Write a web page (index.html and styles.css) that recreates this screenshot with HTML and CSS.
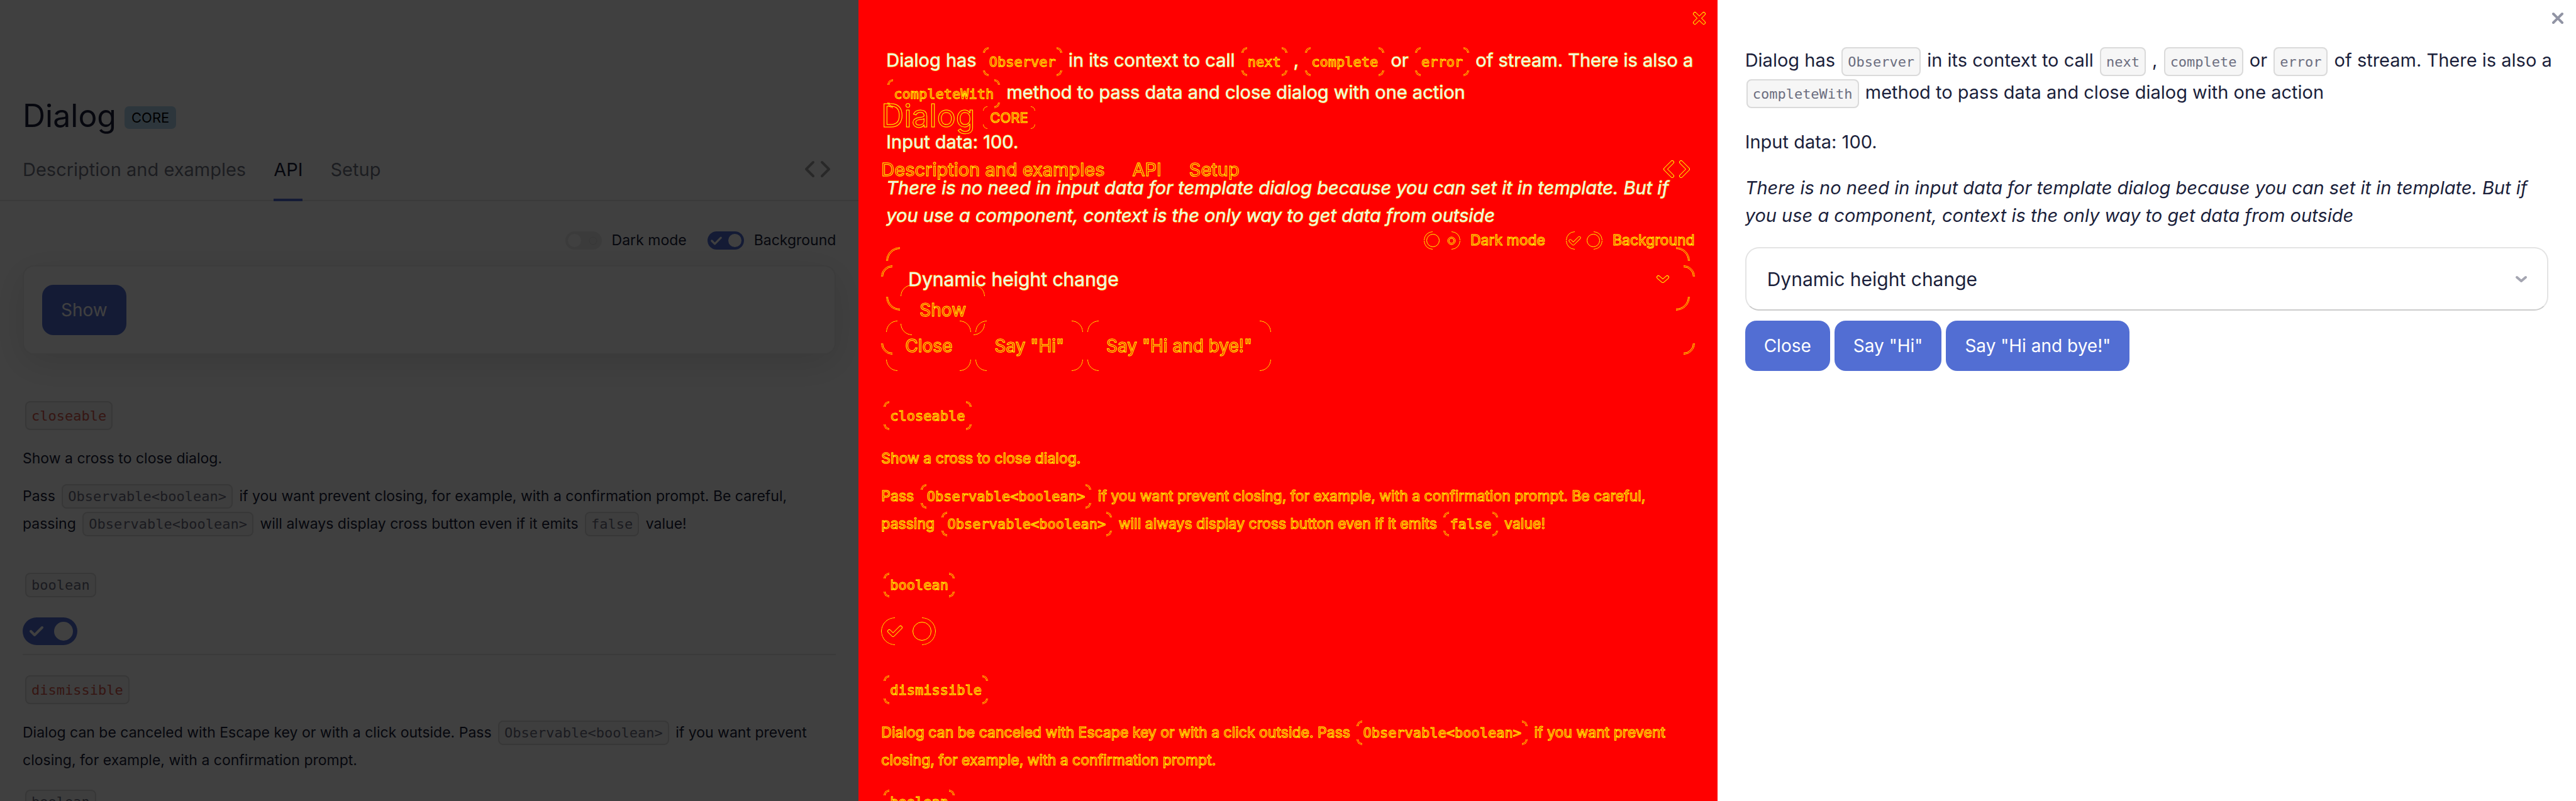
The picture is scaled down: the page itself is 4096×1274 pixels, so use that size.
FILE: index.html
```html
<!DOCTYPE html>
<html lang="en">
<head>
<meta charset="utf-8">
<title>Dialog</title>
<link rel="stylesheet" href="styles.css">
</head>
<body>
<main class="compare">

<section class="shot">
  <div class="layer page">
    <header class="heading"><h1 class="title">Dialog</h1><span class="badge">CORE</span></header>
    <nav class="tabs">
      <a class="tab" href="#examples">Description and examples</a>
      <a class="tab tab-active" href="#api">API</a>
      <a class="tab" href="#setup">Setup</a>
      <button class="source" type="button" aria-label="Source code"><svg width="42" height="28" viewBox="0 0 42 28"><path class="line" d="M14 3 3 14l11 11M28 3l11 11-11 11"/></svg></button>
    </nav>
    <div class="content">
      <div class="options">
        <label class="option"><span class="switch"><input class="track" type="checkbox"><svg class="mark-off" width="14" height="14" viewBox="0 0 14 14"><circle class="ring" cx="7" cy="7" r="6"/></svg></span>Dark mode</label>
        <label class="option"><span class="switch"><input class="track" type="checkbox" checked><svg class="mark" width="20" height="16" viewBox="0 0 24 20"><path class="line" d="M3 10l6 6L21 4"/></svg></span>Background</label>
      </div>
      <div class="card"><button class="button" type="button">Show</button></div>
      <section class="property">
        <h2 class="name"><code class="code code-name">closeable</code></h2>
        <div class="description description-long">
          <p class="text">Show a cross to close dialog.</p>
          <p class="text">Pass <code class="code">Observable&lt;boolean&gt;</code> if you want prevent closing, for example, with a confirmation prompt. Be careful, passing <code class="code">Observable&lt;boolean&gt;</code> will always display cross button even if it emits <code class="code">false</code> value!</p>
        </div>
        <p class="type"><code class="code">boolean</code></p>
        <span class="switch switch-large"><input class="track" type="checkbox" aria-label="closeable" checked><svg class="mark" width="24" height="20" viewBox="0 0 24 20"><path class="line" d="M3 10l6 6L21 4"/></svg></span>
      </section>
      <section class="property property-next">
        <h2 class="name"><code class="code code-name">dismissible</code></h2>
        <div class="description">
          <p class="text">Dialog can be canceled with Escape key or with a click outside. Pass <code class="code">Observable&lt;boolean&gt;</code> if you want prevent closing, for example, with a confirmation prompt.</p>
        </div>
        <p class="type"><code class="code">boolean</code></p>
      </section>
    </div>
  </div>
  <div class="layer overlay"></div>
</section>

<section class="shot diff">
  <div class="layer page">
    <header class="heading"><h1 class="title">Dialog</h1><span class="badge">CORE</span></header>
    <nav class="tabs">
      <a class="tab" href="#examples">Description and examples</a>
      <a class="tab tab-active" href="#api">API</a>
      <a class="tab" href="#setup">Setup</a>
      <button class="source" type="button" aria-label="Source code"><svg width="42" height="28" viewBox="0 0 42 28"><path class="edge" d="M14 3 3 14l11 11M28 3l11 11-11 11"/><path class="line" d="M14 3 3 14l11 11M28 3l11 11-11 11"/></svg></button>
    </nav>
    <div class="content">
      <div class="options">
        <label class="option"><span class="switch"><input class="track" type="checkbox"><svg class="mark-off" width="14" height="14" viewBox="0 0 14 14"><circle class="ring" cx="7" cy="7" r="6"/><circle class="ring" cx="7" cy="7" r="4"/></svg></span>Dark mode</label>
        <label class="option"><span class="switch"><input class="track" type="checkbox" checked><svg class="mark" width="20" height="16" viewBox="0 0 24 20"><path class="edge" d="M3 10l6 6L21 4"/><path class="line" d="M3 10l6 6L21 4"/></svg></span>Background</label>
      </div>
      <div class="card"><button class="button" type="button">Show</button></div>
      <section class="property">
        <h2 class="name"><code class="code code-name">closeable</code></h2>
        <div class="description description-long">
          <p class="text">Show a cross to close dialog.</p>
          <p class="text">Pass <code class="code">Observable&lt;boolean&gt;</code> if you want prevent closing, for example, with a confirmation prompt. Be careful, passing <code class="code">Observable&lt;boolean&gt;</code> will always display cross button even if it emits <code class="code">false</code> value!</p>
        </div>
        <p class="type"><code class="code">boolean</code></p>
        <span class="switch switch-large"><input class="track" type="checkbox" aria-label="closeable" checked><svg class="mark" width="24" height="20" viewBox="0 0 24 20"><path class="edge" d="M3 10l6 6L21 4"/><path class="line" d="M3 10l6 6L21 4"/></svg></span>
      </section>
      <section class="property property-next">
        <h2 class="name"><code class="code code-name">dismissible</code></h2>
        <div class="description">
          <p class="text">Dialog can be canceled with Escape key or with a click outside. Pass <code class="code">Observable&lt;boolean&gt;</code> if you want prevent closing, for example, with a confirmation prompt.</p>
        </div>
        <p class="type"><code class="code">boolean</code></p>
      </section>
    </div>
  </div>
  <div class="layer dialog">
    <button class="close" type="button" aria-label="Close dialog"><svg width="22" height="22" viewBox="0 0 22 22"><path class="edge" d="M4 4l14 14M18 4 4 18"/><path class="line" d="M4 4l14 14M18 4 4 18"/></svg></button>
    <p class="lead">Dialog has <code class="code">Observer</code> in its context to call <code class="code">next</code> , <code class="code">complete</code> or <code class="code">error</code> of stream. There is also a <code class="code">completeWith</code> method to pass data and close dialog with one action</p>
    <p class="data">Input data: 100.</p>
    <p class="note">There is no need in input data for template dialog because you can set it in template. But if you use a component, context is the only way to get data from outside</p>
    <button class="accordion" type="button" aria-expanded="false">Dynamic height change<svg width="22" height="14" viewBox="0 0 22 14"><path class="edge" d="M4 4l7 6 7-6"/><path class="line" d="M4 4l7 6 7-6"/></svg></button>
    <div class="actions">
      <button class="button" type="button">Close</button>
      <button class="button" type="button">Say "Hi"</button>
      <button class="button" type="button">Say "Hi and bye!"</button>
    </div>
  </div>
</section>

<section class="shot">
  <div class="layer dialog">
    <button class="close" type="button" aria-label="Close dialog"><svg width="22" height="22" viewBox="0 0 22 22"><path class="line" d="M4 4l14 14M18 4 4 18"/></svg></button>
    <p class="lead">Dialog has <code class="code">Observer</code> in its context to call <code class="code">next</code> , <code class="code">complete</code> or <code class="code">error</code> of stream. There is also a <code class="code">completeWith</code> method to pass data and close dialog with one action</p>
    <p class="data">Input data: 100.</p>
    <p class="note">There is no need in input data for template dialog because you can set it in template. But if you use a component, context is the only way to get data from outside</p>
    <button class="accordion" type="button" aria-expanded="false">Dynamic height change<svg width="22" height="14" viewBox="0 0 22 14"><path class="line" d="M4 4l7 6 7-6"/></svg></button>
    <div class="actions">
      <button class="button" type="button">Close</button>
      <button class="button" type="button">Say "Hi"</button>
      <button class="button" type="button">Say "Hi and bye!"</button>
    </div>
  </div>
</section>

</main>
</body>
</html>
```
FILE: styles.css
```css
*, *::before, *::after { box-sizing: border-box; }

body {
  margin: 0;
  font-family: Inter, "Liberation Sans", sans-serif;
  color: #1b1f3b;
  background: #fff;
}

h1, h2, p { margin: 0; font-weight: 400; }
svg { display: block; flex: none; }
button { font-family: inherit; color: inherit; border: 0; background: none; padding: 0; }

.compare {
  display: grid;
  grid-template-columns: repeat(3, minmax(0, 1fr));
  height: 100vh;
  overflow: hidden;
}

.shot { display: grid; grid-template-columns: minmax(0, 1fr); overflow: hidden; background: #fff; }
.layer { grid-area: 1 / 1; position: relative; }
.overlay { background: rgba(0, 0, 0, .75); }

.line { fill: none; stroke: currentColor; stroke-width: 4; stroke-linecap: round; stroke-linejoin: round; }
.edge { fill: none; stroke: #ff0; stroke-width: 6; stroke-linecap: round; stroke-linejoin: round; }

/* Documentation page */
.heading { display: flex; align-items: center; gap: 13px; padding: 154px 36px 0; }
.title { font-size: 50px; line-height: 60px; }
.badge {
  position: relative;
  margin-top: 6px;
  padding: 0 11px;
  border-radius: 7px;
  font-size: 22px;
  line-height: 36px;
  color: #000;
  background: #b4d8f0;
}

.tabs { display: flex; gap: 44px; padding: 0 36px; box-shadow: inset 0 -2px #e6e6e6; }
.tab {
  padding: 38px 0 28px;
  border-bottom: 4px solid transparent;
  font-size: 29px;
  line-height: 36px;
  color: rgba(27, 31, 59, .65);
  text-decoration: none;
}
.tab-active { color: #1b1f3b; border-bottom-color: #526ed3; }
.source { margin-left: auto; padding: 4px 8px 0 0; color: #a0a0a0; }

.content { padding: 48px 36px 0; }
.options { display: flex; justify-content: flex-end; gap: 33px; }
.option { display: flex; gap: 16px; font-size: 23px; line-height: 29px; }

.switch { position: relative; display: block; width: 58px; height: 29px; color: #fff; }
.track {
  appearance: none;
  display: flex;
  width: 100%;
  height: 100%;
  margin: 0;
  padding: 4px;
  border-radius: 22px;
  background: #ebebeb;
}
.track::before { content: ""; height: 100%; aspect-ratio: 1; border-radius: 50%; background: #fff; }
.track:checked { justify-content: flex-end; background: #526ed3; }
.mark { position: absolute; left: 4px; top: 7px; }
.mark-off { position: absolute; right: 7px; top: 8px; }
.ring { fill: none; stroke: #d8d8d8; }
.switch-large { width: 87px; height: 44px; }
.switch-large .track { padding: 7px; }
.switch-large .mark { left: 10px; top: 12px; }

.card {
  position: relative;
  margin: 25px 0 74px;
  padding: 29px;
  border: 2px solid #ededed;
  border-radius: 18px;
  background: #fff;
  box-shadow: 0 14px 58px rgba(0, 0, 0, .12);
}
.button {
  position: relative;
  height: 80px;
  padding: 0 30px;
  border-radius: 18px;
  font-size: 28px;
  color: #fff;
  background: #526ed3;
}

.code {
  position: relative;
  margin: 0 4px;
  padding: 5px 8px;
  border: 2px solid #dadada;
  border-radius: 8px;
  font: 22px/22px "DejaVu Sans Mono", monospace;
  color: #6c6e80;
  background: #f6f6f6;
  white-space: nowrap;
}
.name { font: 22px/47px "DejaVu Sans Mono", monospace; }
.type { font: 22px/40px "DejaVu Sans Mono", monospace; }
.code-name { padding: 9px 8px 8px; color: #d5584c; }
.description { display: grid; gap: 16px; padding: 22px 0 25px; }
.description-long { padding-bottom: 56px; }
.text { font-size: 23px; line-height: 44px; }
.switch-large { margin-top: 31px; }
.property-next { margin-top: 14px; padding-top: 32px; border-top: 2px solid #e6e6e6; }

/* Dialog */
.dialog { padding: 70px 44px 0; font-size: 29px; line-height: 44px; }
.lead { margin-right: -16px; line-height: 51px; }
.lead .code { margin: 0 2px; padding: 9px 8px 8px; }
.data { margin-top: 32px; }
.note { margin: 29px 0 28px; font-style: italic; }
.close { position: absolute; top: 18px; right: 18px; color: #9194a4; }
.accordion {
  position: relative;
  display: flex;
  align-items: center;
  justify-content: space-between;
  width: 100%;
  height: 101px;
  padding: 0 30px 0 33px;
  border: 2px solid #e4e4e4;
  border-bottom-color: #ccc;
  border-radius: 22px;
  font-size: 30px;
}
.accordion .line { stroke: #a4a5b1; }
.actions { display: flex; gap: 7px; margin-top: 16px; }

/* Difference view: contours only, on red */
.diff { background: #f00; color: transparent; -webkit-text-stroke: 1px #ff0; }
.diff .badge, .diff .tab, .diff .card, .diff .button, .diff .code, .diff .accordion, .diff .track {
  color: transparent;
  background: none;
  border-color: transparent;
  box-shadow: none;
}
.diff .tabs { box-shadow: none; }
.diff .property-next { border-color: transparent; }
.diff .line, .diff .accordion .line { stroke: #f00; }
.diff .ring { stroke: #ff0; }
.diff .track::before { border: 1px solid #ff0; background: none; }
.diff .lead, .diff .data, .diff .note, .diff .accordion {
  color: #eee;
  -webkit-text-stroke: 1px #ff0;
  paint-order: stroke fill;
}
.diff .code { -webkit-text-stroke: 1px #ff0; }

.diff .badge::after, .diff .button::after, .diff .card::after, .diff .code::after,
.diff .accordion::after, .diff .switch::after {
  --r: 18px;
  content: "";
  position: absolute;
  inset: 0;
  border: 1px solid #ff0;
  border-radius: var(--r);
  mask:
    linear-gradient(#000 0 0) 0 0 / var(--r) var(--r) no-repeat,
    linear-gradient(#000 0 0) 100% 0 / var(--r) var(--r) no-repeat,
    linear-gradient(#000 0 0) 0 100% / var(--r) var(--r) no-repeat,
    linear-gradient(#000 0 0) 100% 100% / var(--r) var(--r) no-repeat;
}
.diff .badge::after { --r: 7px; }
.diff .switch::after { --r: 14px; }
.diff .switch-large::after { --r: 22px; }
.diff .card::after { inset: -2px; border: 3px double #ff0; }
.diff .code::after { --r: 9px; inset: -2px; border: 3px double #ff0; }
.diff .accordion::after { --r: 22px; inset: -2px; border: 3px double #ff0; }
```
